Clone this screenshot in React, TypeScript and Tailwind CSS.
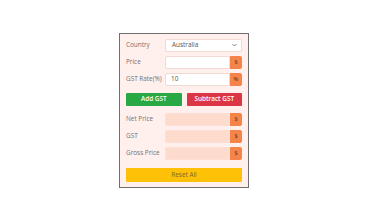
import { useState } from "react"

type Row = {
  addon: string
  label: string
  readOnly?: boolean
  value?: string
}

const inputRows: Row[] = [
  { addon: "$", label: "Price" },
  { addon: "%", label: "GST Rate(%)", value: "10" },
]

const resultRows: Row[] = [
  { addon: "$", label: "Net Price", readOnly: true },
  { addon: "$", label: "GST", readOnly: true },
  { addon: "$", label: "Gross Price", readOnly: true },
]

export default function App() {
  const [country, setCountry] = useState("Australia")

  return (
    <main className="flex h-screen w-full items-center justify-center bg-white font-['Open_Sans',sans-serif] text-[6.4px] text-[#707070]">
      <section className="flex w-[130px] flex-col border border-[#6f6f6f] bg-[#fff0ee] px-[6px] pt-[5px] pb-[5px]">
        <div className="mb-[4px] flex h-[13px] items-center">
          <label className="w-[39px] shrink-0">Country</label>
          <div className="relative flex h-full flex-1 items-center rounded-[2px] border border-[#f3d9d4] bg-white pl-[6px] text-[#555]">
            <span>{country}</span>
            <svg
              className="absolute right-[4px] h-[4px] w-[5px]"
              fill="none"
              onClick={() => setCountry(country)}
              stroke="#555"
              strokeWidth="1.4"
              viewBox="0 0 10 6"
            >
              <path d="M1 1l4 4 4-4" />
            </svg>
          </div>
        </div>

        {inputRows.map((row) => (
          <FieldRow key={row.label} row={row} />
        ))}

        <div className="mt-[3px] mb-[7px] flex h-[13px] gap-[5px] font-semibold text-white">
          <button className="flex-1 rounded-[1px] bg-[#28a745]">Add GST</button>
          <button className="flex-1 rounded-[1px] bg-[#dc3545]">Subtract GST</button>
        </div>

        {resultRows.map((row) => (
          <FieldRow key={row.label} row={row} />
        ))}

        <button className="mt-[4px] h-[14px] w-full rounded-[1px] bg-[#ffc107] text-[#7a6630]">
          Reset All
        </button>
      </section>
    </main>
  )
}

const FieldRow = ({ row }: { row: Row }) => {
  return (
    <div className="mb-[4px] flex h-[13px] items-center">
      <label className="w-[39px] shrink-0">{row.label}</label>
      <div className="flex h-full flex-1">
        <div
          className={
            row.readOnly
              ? "flex flex-1 items-center rounded-l-[2px] border border-[#fde0d3] bg-[#fedccd] pl-[5px]"
              : "flex flex-1 items-center rounded-l-[2px] border border-[#f3d9d4] bg-white pl-[5px] text-[#555]"
          }
        >
          {row.value ?? ""}
        </div>
        <div className="flex w-[12px] items-center justify-center rounded-r-[2px] bg-[#f5844a] text-[5.5px] font-semibold text-[#7a3a14]">
          {row.addon}
        </div>
      </div>
    </div>
  )
}
